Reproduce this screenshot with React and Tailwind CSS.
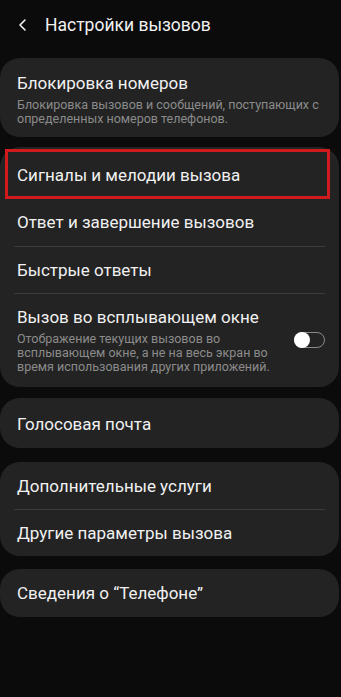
import React from 'react';

const Row = ({ title, subtitle, className = '', children }) => (
  <div className={`flex items-center pl-[17px] pr-[13px] ${className}`}>
    <div className="flex-1">
      <div className="text-[17px] leading-[21px] text-[#f1f1f1]">{title}</div>
      {subtitle && (
        <div className="mt-[4px] text-[12.5px] leading-[14px] text-[#8b8b8b]">{subtitle}</div>
      )}
    </div>
    {children}
  </div>
);

const Divider = () => <div className="mx-[14px] h-px bg-[#3a3a3a]" />;

export default function App() {
  return (
    <div className="w-[341px] h-[697px] bg-[#0b0b0b] overflow-hidden" style={{ fontFamily: 'Roboto, "Noto Sans", sans-serif' }}>
      {/* Header */}
      <div className="flex items-center h-[50px] pl-[15px]">
        <svg className="w-[16px] h-[16px] text-[#f2f2f2]" viewBox="0 0 16 16" fill="none" stroke="currentColor" strokeWidth="1.6" strokeLinecap="round" strokeLinejoin="round">
          <path d="M10 3 L5 8 L10 13" />
        </svg>
        <span className="ml-[14px] text-[17.5px] text-[#f2f2f2]">Настройки вызовов</span>
      </div>

      <div className="mt-[8px] flex flex-col gap-[11px] w-[339px]">
        {/* Blocking */}
        <div className="bg-[#232323] rounded-[20px] h-[79px] flex items-center">
          <Row
            title="Блокировка номеров"
            subtitle={<>Блокировка вызовов и сообщений, поступающих с<br />определенных номеров телефонов.</>}
            className="w-full pt-[3px]"
          />
        </div>

        {/* Calls group */}
        <div className="bg-[#232323] rounded-[20px] -mt-px">
          <div className="relative h-[52px] flex items-center">
            <Row title="Сигналы и мелодии вызова" className="w-full pt-[4px]" />
            <div className="absolute left-[5px] top-[2px] w-[325px] h-[50px] border-[3px] border-[#cf1a1e]" />
          </div>
          <div className="h-[47px] flex items-center">
            <Row title="Ответ и завершение вызовов" className="w-full" />
          </div>
          <Divider />
          <div className="h-[46px] flex items-center">
            <Row title="Быстрые ответы" className="w-full" />
          </div>
          <Divider />
          <div className="h-[93px] flex items-center">
            <Row
              title="Вызов во всплывающем окне"
              subtitle={<>Отображение текущих вызовов во<br />всплывающем окне, а не на весь экран во<br />время использования других приложений.</>}
              className="w-full"
            >
              <div className="relative w-[31px] h-[16px] rounded-full border border-[#8a8a8a] mr-[1px] mb-[1px]">
                <div className="absolute left-[-1px] top-[-1px] w-[16px] h-[16px] rounded-full bg-white" />
              </div>
            </Row>
          </div>
        </div>

        {/* Voicemail */}
        <div className="bg-[#232323] rounded-[20px] h-[50px] flex items-center">
          <Row title="Голосовая почта" className="w-full pt-[3px]" />
        </div>

        {/* Extra */}
        <div className="bg-[#232323] rounded-[20px] mt-[3px]">
          <div className="h-[47px] flex items-center">
            <Row title="Дополнительные услуги" className="w-full pt-[2px]" />
          </div>
          <Divider />
          <div className="h-[46px] flex items-center">
            <Row title="Другие параметры вызова" className="w-full" />
          </div>
        </div>

        {/* About */}
        <div className="bg-[#232323] rounded-[20px] h-[48px] mt-[2px] flex items-center">
          <Row title="Сведения о “Телефоне”" className="w-full" />
        </div>
      </div>
    </div>
  );
}
